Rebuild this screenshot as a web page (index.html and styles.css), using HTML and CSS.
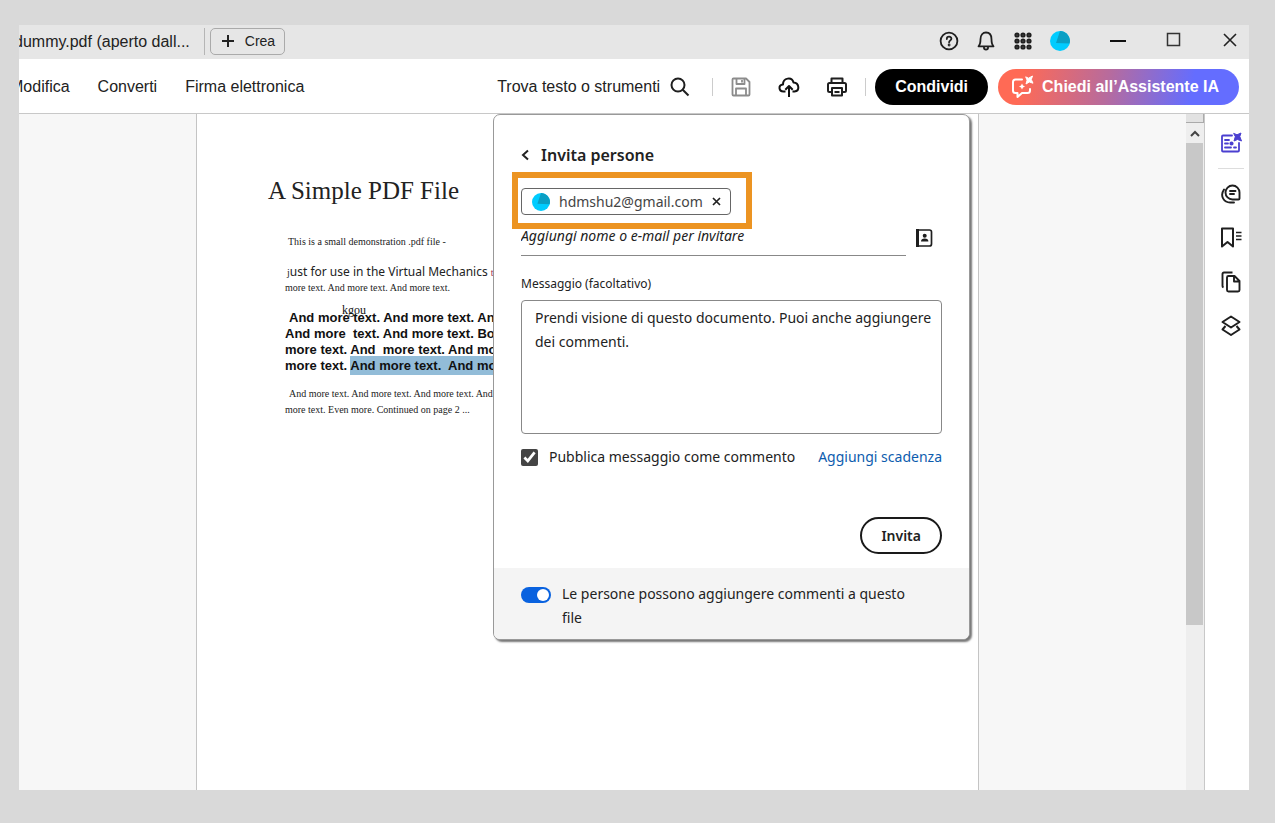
FILE: index.html
```html
<!DOCTYPE html>
<html lang="it">
<head>
  <meta charset="UTF-8">
  <title>dummy.pdf</title>
  <link rel="stylesheet" href="styles.css">
</head>
<body>

  <div class="window">
    <header class="titlebar">
      <span class="tab">dummy.pdf (aperto dall...</span>
      <button class="create" type="button">
        <svg width="12" height="12" viewBox="0 0 12 12"><path d="M6 0v12M0 6h12" stroke="#222" stroke-width="2"/></svg>
        Crea
      </button>
      <div class="account">
        <button type="button" aria-label="Aiuto">
          <svg width="20" height="20" viewBox="0 0 20 20" fill="none" stroke="#1f1f1f" stroke-width="1.8" stroke-linecap="round"><circle cx="10" cy="10" r="8.4"/><path d="M7.8 8c0-3 4.6-3 4.6-.3 0 1.7-2.3 1.7-2.3 3.6"/><circle cx="10.1" cy="14" r=".5"/></svg>
        </button>
        <button type="button" aria-label="Notifiche">
          <svg width="20" height="20" viewBox="0 0 20 20" fill="none" stroke="#1f1f1f" stroke-width="1.8" stroke-linejoin="round"><path d="M2.5 15.3c1.7-1.7 2-3 2-7C4.5 4 6.8 1.5 10 1.5s5.5 2.5 5.5 6.8c0 4 .3 5.3 2 7z"/><path d="M8 16v1c0 2 4 2 4 0v-1"/></svg>
        </button>
        <button type="button" aria-label="App">
          <svg width="20" height="20" viewBox="0 0 20 20" fill="#777" stroke="#1f1f1f" stroke-width="2"><circle cx="4" cy="4" r="1.6"/><circle cx="10" cy="4" r="1.6"/><circle cx="16" cy="4" r="1.6"/><circle cx="4" cy="10" r="1.6"/><circle cx="10" cy="10" r="1.6"/><circle cx="16" cy="10" r="1.6"/><circle cx="4" cy="16" r="1.6"/><circle cx="10" cy="16" r="1.6"/><circle cx="16" cy="16" r="1.6"/></svg>
        </button>
        <button type="button" aria-label="Profilo">
          <svg width="20" height="20" viewBox="0 0 20 20"><circle cx="10" cy="10" r="10" fill="#0cf"/><path d="M10 0a10 10 0 0 1 9.6 12.5L6 12z" fill="#0a9fc4"/></svg>
        </button>
      </div>
      <div class="controls">
        <button type="button" aria-label="Riduci a icona"><svg width="16" height="16" viewBox="0 0 16 16"><path d="M0 9h16" stroke="#111" stroke-width="2"/></svg></button>
        <button type="button" aria-label="Ingrandisci"><svg width="16" height="16" viewBox="0 0 16 16"><rect x="1.5" y="1.5" width="12" height="12" fill="none" stroke="#333" stroke-width="1.5"/></svg></button>
        <button type="button" aria-label="Chiudi"><svg width="16" height="16" viewBox="0 0 16 16"><path d="M2 2l12 12M14 2L2 14" stroke="#222" stroke-width="1.6"/></svg></button>
      </div>
    </header>

    <div class="toolbar">
      <nav class="menu">
        <a href="#">Modifica</a>
        <a href="#">Converti</a>
        <a href="#">Firma elettronica</a>
      </nav>
      <button class="search" type="button">
        Trova testo o strumenti
        <svg width="20" height="20" viewBox="0 0 20 20" fill="none" stroke="#1f1f1f" stroke-width="2"><circle cx="8" cy="8" r="6.5"/><path d="M12.7 12.7L18.5 18.5"/></svg>
      </button>
      <div class="tools">
        <button type="button" aria-label="Salva">
          <svg width="22" height="22" viewBox="0 0 22 22" fill="none" stroke="#8c8c8c" stroke-width="1.8" stroke-linejoin="round"><path d="M2.5 3.5q0-1 1-1h12.5l3.5 3.5v12.5q0 1-1 1h-15q-1 0-1-1z"/><path d="M6.5 2.5v5.5h8v-5.5M12 4v2.5M6 19.5v-7h10v7"/></svg>
        </button>
        <button type="button" aria-label="Carica">
          <svg width="22" height="22" viewBox="0 0 22 22" fill="none" stroke="#111" stroke-width="2" stroke-linejoin="round"><path d="M7.5 15.5H5.5c-5 0-5.5-6.5-.5-7C5 1.5 14 .5 15.5 6.5c6 .5 6.5 8.5 1 9H14.5"/><path d="M11 21V10M7.3 13.7L11 10l3.7 3.7"/></svg>
        </button>
        <button type="button" aria-label="Stampa">
          <svg width="22" height="22" viewBox="0 0 22 22" fill="none" stroke="#1f1f1f" stroke-width="2" stroke-linejoin="round"><path d="M5.5 7V2.5h11V7M5.5 16H3.5q-1.5 0-1.5-1.5V8.5Q2 7 3.5 7h15q1.5 0 1.5 1.5v6q0 1.5-1.5 1.5h-2"/><path d="M6 12h10v7.5H6zM8.5 16h5"/></svg>
        </button>
      </div>
      <button class="share" type="button">Condividi</button>
      <button class="assistant" type="button">
        <svg width="24" height="24" viewBox="0 0 24 24" fill="none" stroke="#fff" stroke-width="2" stroke-linejoin="round" stroke-linecap="round"><path d="M12 4.5H5.5Q3 4.5 3 7v8.5Q3 18 5.5 18H7.5v4L12 18h5.5q2.5 0 2.5-2.5V14"/><path d="M16 2l2.5 1.2L22.5 1l-1.2 3.5 1.7 3.7-3.7-1.2L16 9l1-3.5z" fill="#fff" stroke-width="1"/><path d="M12 8.5l1 2 2 1-2 1-1 2-1-2-2-1 2-1z" fill="#fff" stroke="none"/></svg>
        Chiedi all’Assistente IA
      </button>
    </div>

    <main class="content">
      <div class="viewer">
        <article class="page">
          <h1>A Simple PDF File</h1>
          <p class="small intro">This is a small demonstration .pdf file -</p>
          <p class="just"><span class="initial">j</span>ust for use in the Virtual Mechanics <span class="rest">t</span></p>
          <p class="small">more text. And more text. And more text.</p>
          <div class="bold">
            <span class="note">kgou</span>
            <p class="first">And more text. And more text. And</p>
            <p>And more&nbsp; text. And more text. Boring</p>
            <p>more text. And&nbsp; more text. And more</p>
            <p>more text. <mark>And more text.&nbsp; And more text.</mark></p>
          </div>
          <div class="small closing">
            <p class="first">And more text. And more text. And more text. And</p>
            <p>more text. Even more. Continued on page 2 ...</p>
          </div>
        </article>
      </div>

      <div class="scrollbar">
        <span class="split"></span>
        <button type="button" aria-label="Scorri in alto"><svg width="10" height="7" viewBox="0 0 10 7"><path d="M1 6l4-4 4 4" fill="none" stroke="#444" stroke-width="2"/></svg></button>
        <span class="thumb"></span>
      </div>

      <aside class="sidebar">
        <button class="ai" type="button" aria-label="Assistente IA">
          <svg width="22" height="22" viewBox="0 0 22 22" fill="none" stroke="#4b3fd0" stroke-width="1.8" stroke-linecap="round"><path d="M12 3.5H3Q2 3.5 2 4.5v14q0 1 1 1h15q1 0 1-1V11"/><path d="M5 8h4M5 11.5h3M5 15.5h6M14 15.5h2"/><circle cx="11.5" cy="11.5" r="1.2" fill="#4b3fd0"/><path d="M14 1.5l3 1.3L21 1l-1.2 3.5L21.5 9l-4-1.5L14 9l1.2-4z" fill="#4b3fd0" stroke-width="1"/></svg>
        </button>
        <button type="button" aria-label="Commenti">
          <svg width="22" height="22" viewBox="0 0 22 22" fill="none" stroke="#1f1f1f" stroke-width="1.9" stroke-linecap="round" stroke-linejoin="round"><path d="M12.5 2.5a7 7 0 0 1 7 7v6q0 1-1 1h-6a7 7 0 0 1 0-14z"/><path d="M4 6.5C-.5 13 4 20 11 19.5h3M10 8h5.5M10 11h4"/></svg>
        </button>
        <button type="button" aria-label="Segnalibri">
          <svg width="22" height="22" viewBox="0 0 22 22" fill="none" stroke="#1f1f1f" stroke-width="2" stroke-linejoin="round"><path d="M2 1.5h11v18L7.5 15 2 19.5z"/><path d="M16 5.5h5.5M16 9h5.5M16 12.5h5.5" stroke-width="1.6"/></svg>
        </button>
        <button type="button" aria-label="Pagine">
          <svg width="22" height="22" viewBox="0 0 22 22" fill="none" stroke="#1f1f1f" stroke-width="1.9" stroke-linejoin="round"><path d="M8.5 5h6l5 5v9q0 1.5-1.5 1.5H8.5Q7 20.5 7 19V6.5Q7 5 8.5 5zM14 5v5.5h5.5M3.5 16.5Q2.5 16 2.5 15V3Q2.5 1.5 4 1.5h8.5"/></svg>
        </button>
        <button type="button" aria-label="Livelli">
          <svg width="22" height="22" viewBox="0 0 22 22" fill="none" stroke="#1f1f1f" stroke-width="2" stroke-linejoin="round"><path d="M11 1.5l8.5 5.5-8.5 5.5L2.5 7zM5.5 11l-3 3.5L11 20l8.5-5.5-3-3.5"/></svg>
        </button>
      </aside>

      <form class="panel">
        <div class="panel-body">
          <div class="panel-head">
            <button type="button" aria-label="Indietro"><svg width="8" height="12" viewBox="0 0 8 12"><path d="M7 1.5L2 6l5 4.5" fill="none" stroke="#222" stroke-width="2"/></svg></button>
            <h2>Invita persone</h2>
          </div>
          <div class="highlight">
            <div class="chip">
              <svg width="18" height="18" viewBox="0 0 20 20"><circle cx="10" cy="10" r="10" fill="#0cf"/><path d="M10 0a10 10 0 0 1 9.6 12.5L6 12z" fill="#0a9fc4"/></svg>
              <span>hdmshu2@gmail.com</span>
              <button type="button" aria-label="Rimuovi"><svg width="9" height="9" viewBox="0 0 9 9"><path d="M1 1l7 7M8 1L1 8" stroke="#222" stroke-width="1.7"/></svg></button>
            </div>
          </div>
          <div class="invite">
            <input type="text" aria-label="Persone da invitare" placeholder="Aggiungi nome o e-mail per invitare">
            <button type="button" aria-label="Rubrica">
              <svg width="18" height="20" viewBox="0 0 18 20" fill="none" stroke="#1f1f1f"><path d="M3 2h11.5Q16.5 2 16.5 4v12q0 2-2 2H3z" stroke-width="1.7"/><path d="M2.5 1v18" stroke-width="3"/><circle cx="9.7" cy="7.8" r="2" fill="#1f1f1f" stroke="none"/><path d="M6 13.5q0-3 3.7-3t3.7 3z" fill="#1f1f1f" stroke="none"/></svg>
            </button>
          </div>
          <label class="message-label" for="message">Messaggio (facoltativo)</label>
          <textarea id="message">Prendi visione di questo documento. Puoi anche aggiungere dei commenti.</textarea>
          <div class="options">
            <label><input type="checkbox" checked> Pubblica messaggio come commento</label>
            <a href="#">Aggiungi scadenza</a>
          </div>
          <button class="invite-button" type="submit">Invita</button>
        </div>
        <label class="permission">
          <input type="checkbox" role="switch" checked>
          <span>Le persone possono aggiungere commenti a questo file</span>
        </label>
      </form>
    </main>
  </div>

</body>
</html>
```
FILE: styles.css
```css
* { box-sizing: border-box; }
body { margin: 0; padding: 25px 26px 33px 19px; min-height: 100vh; display: flex; background: #d9d9d9; font-family: "Liberation Sans", Arial, sans-serif; color: #222; }
h1, h2, p { margin: 0; }
button { display: flex; align-items: center; justify-content: center; padding: 0; border: none; background: none; font: inherit; color: inherit; cursor: pointer; }
a { color: inherit; text-decoration: none; }
svg { display: block; flex: none; }

.window { flex: 1; display: flex; flex-direction: column; overflow: hidden; background: #fff; }

/* title bar */
.titlebar { display: flex; align-items: center; height: 34px; padding-bottom: 2px; background: #e6e6e6; }
.tab { margin-left: -5px; padding-right: 14px; font-size: 16px; line-height: 27px; border-right: 1px solid #b5b5b5; white-space: nowrap; }
.create { gap: 11px; margin-left: 5px; height: 27px; padding: 0 9px 0 11px; border: 1px solid #aaa; border-radius: 5px; font-size: 14px; }
.account { display: flex; gap: 17px; margin-left: auto; }
.controls { display: flex; gap: 40px; margin: 0 11px 0 40px; padding-bottom: 2px; }

/* toolbar */
.toolbar { display: flex; align-items: center; height: 55px; padding-top: 2px; border-bottom: 1px solid #c8c8c8; font-size: 16px; white-space: nowrap; }
.menu { display: flex; gap: 28px; margin-left: -9px; }
.search { gap: 10px; margin-left: auto; }
.tools { display: flex; gap: 26px; margin: 0 9px 0 22px; padding: 0 17px; border: solid #ccc; border-width: 0 1px; height: 18px; align-items: center; }
.share, .assistant { height: 36px; border-radius: 18px; color: #fff; font-weight: bold; }
.share { padding: 0 20px; background: #000; }
.assistant { gap: 8px; margin: 0 10px; padding: 0 20px 0 12px; background: linear-gradient(100deg, #ff6a55 10%, #b86b9c 45%, #646dff 80%); }

/* document */
.content { position: relative; flex: 1; display: flex; }
.viewer { flex: 1; display: flex; padding: 0 207px 0 177px; background: #f7f7f7; }
.page { flex: 1; padding: 60px 0 0 88px; background: #fff; border: solid #c4c4c4; border-width: 0 1px; white-space: nowrap; overflow: hidden; }
.page h1 { margin-left: -17px; font: 25px/34px "Liberation Serif", serif; }
.small { font: 10px/16px "Liberation Serif", serif; }
.intro { margin: 26px 0 0 3px; }
.just { margin: 14px 0 0 2px; font: 12px/16px "Noto Sans", sans-serif; }
.initial, .rest { font: 10px "Liberation Serif", serif; }
.rest { color: #a03050; }
.bold { position: relative; margin-top: 14px; font: bold 13px/16px "Liberation Sans", sans-serif; color: #111; }
.first { padding-left: 4px; }
.note { position: absolute; left: 57px; top: -8px; font: 12px/16px "Liberation Serif", serif; }
mark { padding: 2px 0; background: #92bcd8; color: inherit; }
.closing { margin-top: 12px; }

.scrollbar { width: 19px; display: flex; flex-direction: column; background: #eee; border-right: 1px solid #c8c8c8; }
.split { height: 9px; background: #e2e2e2; border: solid #aaa; border-width: 0 1px 1px 0; }
.scrollbar button { height: 20px; }
.thumb { height: 482px; margin-right: 1px; background: #c8c8c8; }

.sidebar { width: 44px; display: flex; flex-direction: column; align-items: center; gap: 22px; padding: 18px 0 0 8px; background: #fff; }
.ai { padding-bottom: 14px; margin-bottom: -8px; width: 26px; border-bottom: 1px solid #ddd; }

/* invite panel */
.panel { position: absolute; top: 0; right: 279px; width: 477px; background: #fff; border: 1px solid #999; border-radius: 7px; box-shadow: 2px 2px 2px #777; overflow: hidden; font: 14px/20px "Noto Sans", sans-serif; color: #222; }
.panel-body { display: flex; flex-direction: column; padding: 30px 27px 14px; }
.panel-head { display: flex; align-items: center; gap: 12px; }
.panel-head h2 { font-size: 16px; font-weight: 600; line-height: 20px; }
.highlight { align-self: flex-start; margin: 7px 0 0 -9px; padding: 10px 15px 8px 3px; border: 6px solid #ec9422; }
.chip { display: flex; align-items: center; height: 27px; padding: 0 9px 0 10px; border: 1px solid #666; border-radius: 4px; color: #444; }
.chip span { margin: 0 9px; }
.invite { display: flex; align-items: center; gap: 9px; margin: -4px 9px 0 0; }
.invite input { flex: 1; height: 31px; padding: 0 0 10px; border: none; border-bottom: 1px solid #888; outline: none; background: none; font: italic 14px "Noto Sans", sans-serif; }
.invite input::placeholder { color: #222; }
.invite button { padding-bottom: 6px; }
.message-label { margin-top: 18px; font-size: 12px; }
textarea { height: 134px; margin-top: 6px; padding: 5px 6px 5px 13px; border: 1px solid #888; border-radius: 4px; resize: none; outline: none; font: inherit; line-height: 24px; color: inherit; }
.options { display: flex; justify-content: space-between; align-items: center; margin-top: 13px; }
.options label { display: flex; align-items: center; gap: 11px; }
.options input { width: 17px; height: 17px; margin: 0; accent-color: #444; }
.options a { color: #0d5cae; }
.invite-button { align-self: flex-end; height: 37px; margin-top: 50px; padding: 0 19px; border: 2px solid #1a1a1a; border-radius: 19px; font-weight: 600; }
.permission { display: flex; gap: 11px; padding: 14px 60px 9px 27px; background: #f4f4f4; line-height: 24px; }
.permission input { appearance: none; flex: none; display: flex; justify-content: flex-end; width: 30px; height: 16px; margin: 5px 0 0; padding: 2px; border-radius: 8px; background: #0962df; }
.permission input::before { content: ""; width: 12px; height: 12px; border-radius: 50%; background: #fff; }
```
